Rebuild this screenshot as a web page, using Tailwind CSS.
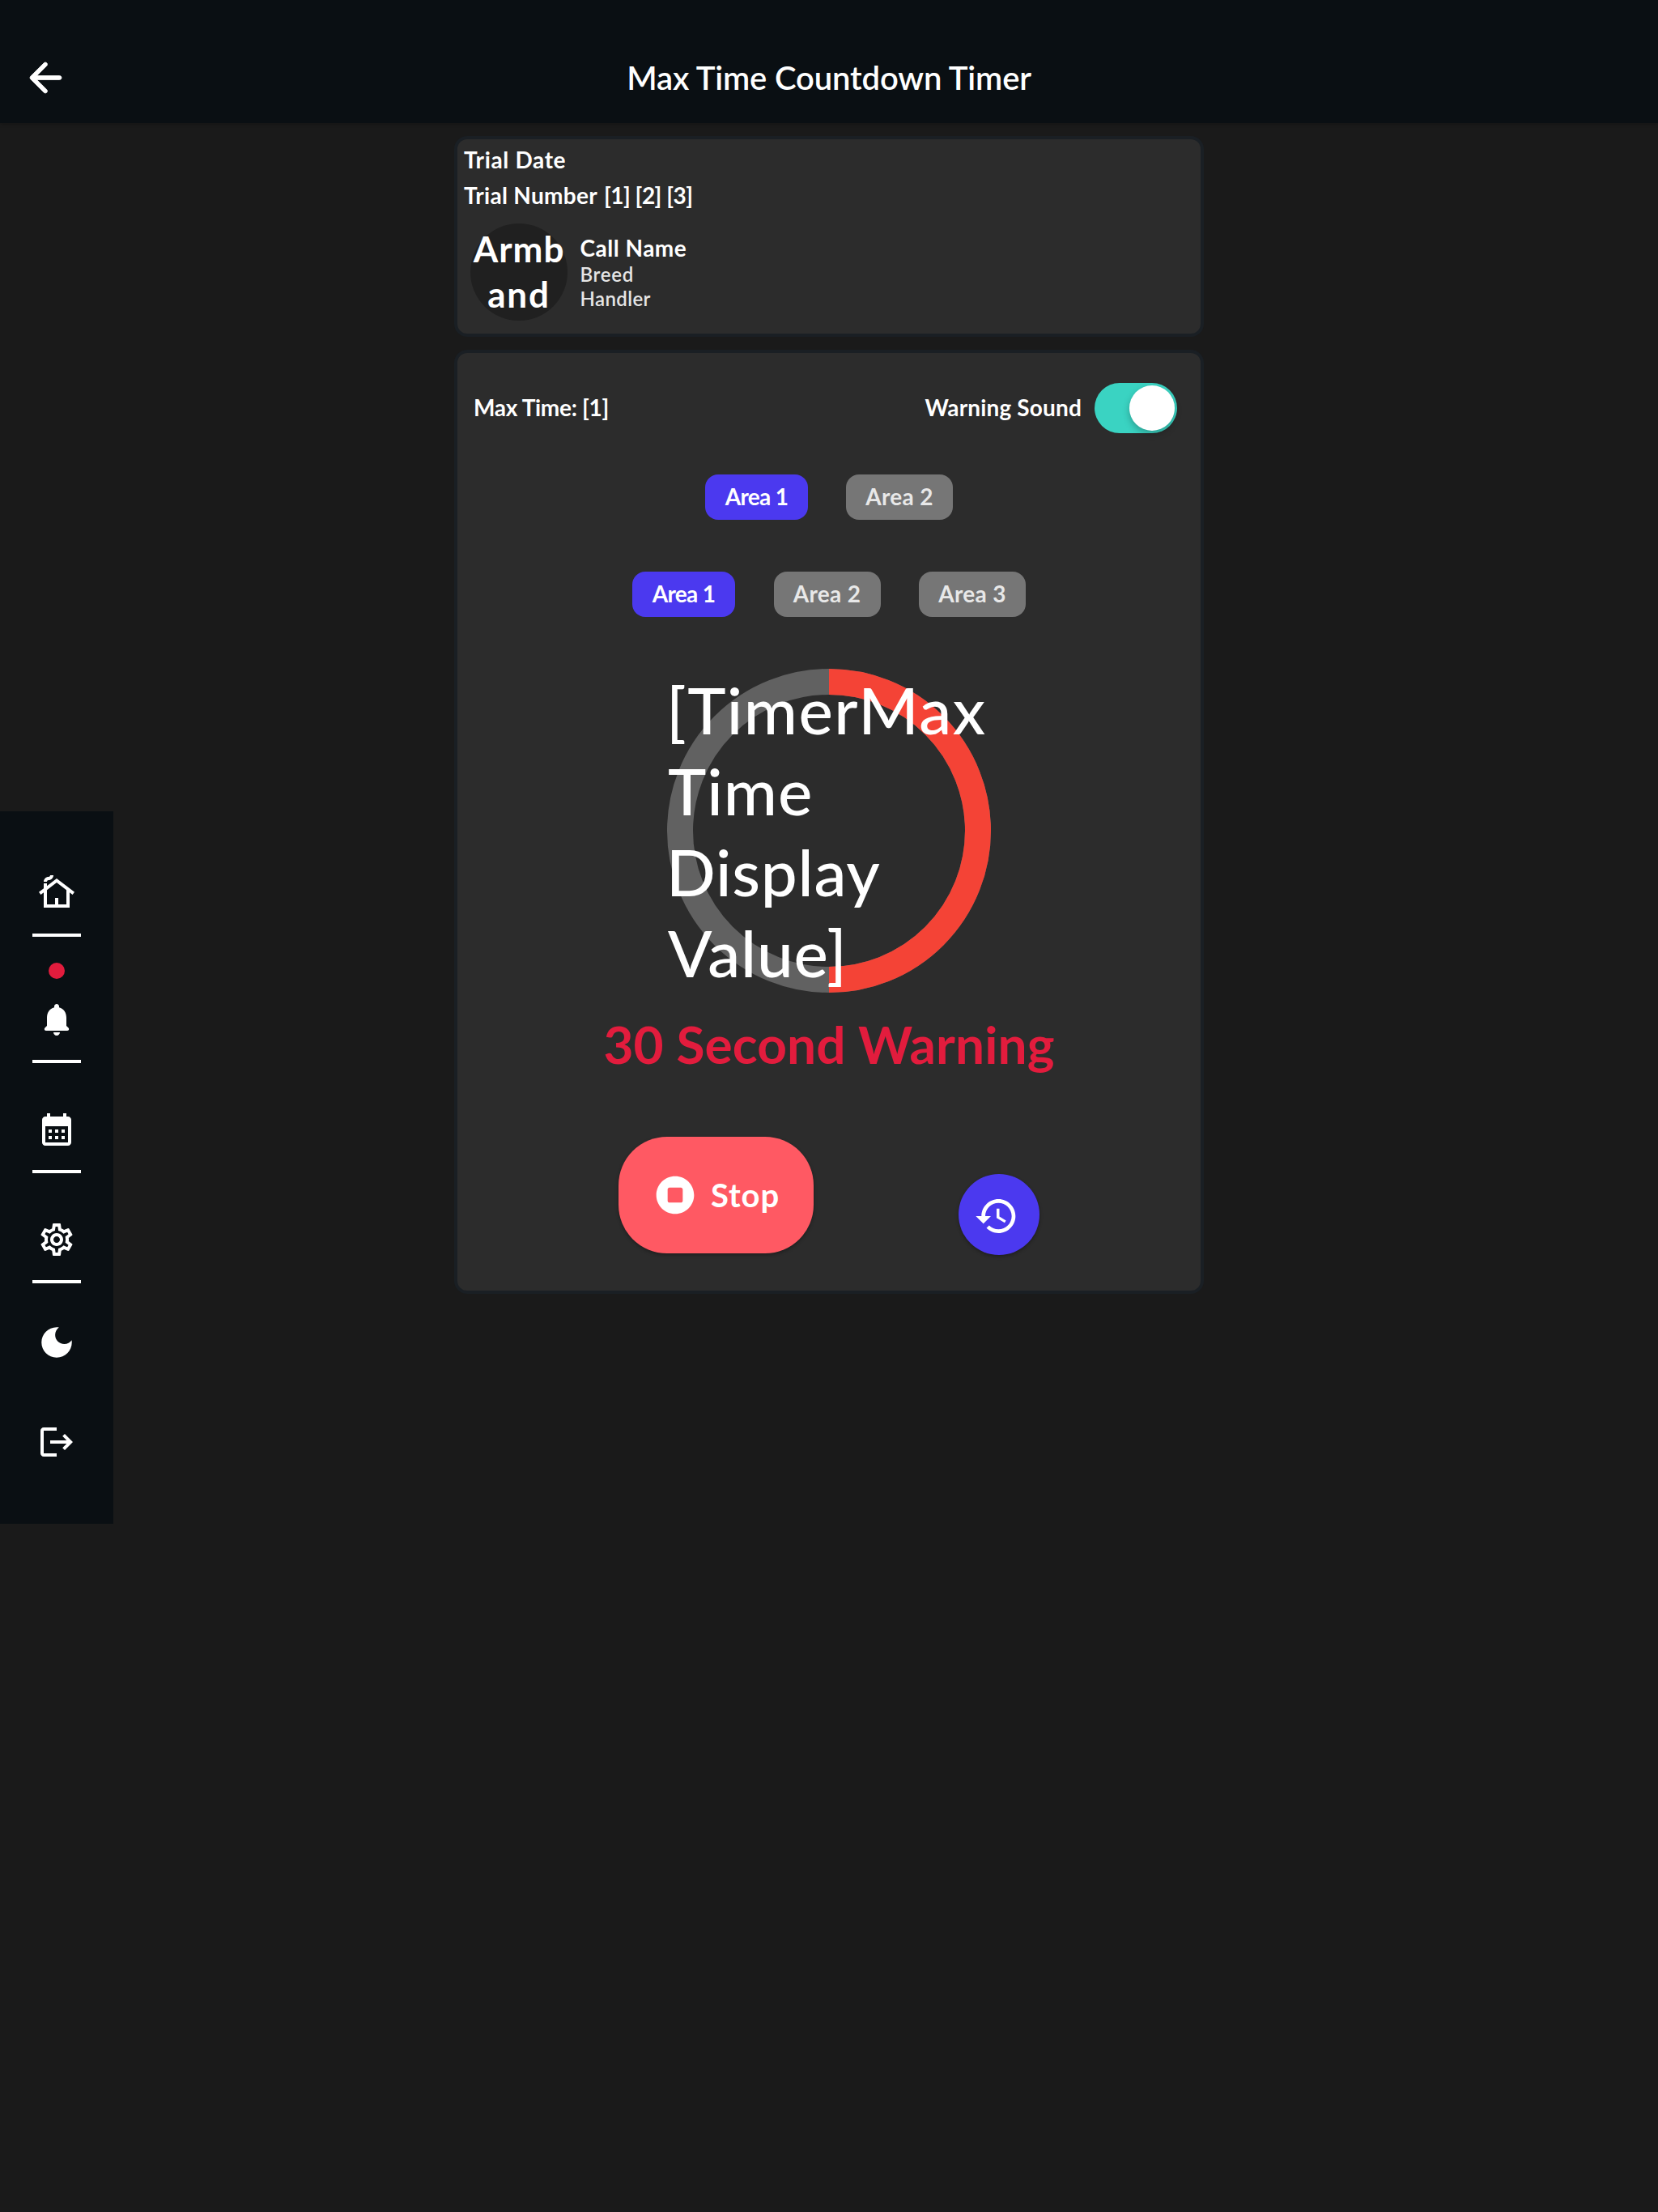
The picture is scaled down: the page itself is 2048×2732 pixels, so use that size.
<!DOCTYPE html>
<html lang="en">
<head>
<meta charset="utf-8">
<title>Max Time Countdown Timer</title>
<script src="https://cdn.jsdelivr.net/npm/@tailwindcss/browser@4"></script>
</head>
<body class="h-[2732px] w-[2048px] overflow-hidden bg-[#1a1a1a] font-['Lato',sans-serif] text-white">
  <header class="relative grid h-[152px] grid-cols-[1fr_auto_1fr] items-center bg-[#0a0f13] pt-10 shadow-[0_2px_4px_rgba(0,0,0,0.2)]">
    <button class="ml-[26px] size-[60px]" aria-label="Back">
      <svg viewBox="0 0 24 24" class="size-full fill-white stroke-white stroke-[0.3]"><path d="M19 11H7.83l4.88-4.88c.39-.39.39-1.03 0-1.42-.39-.39-1.02-.39-1.41 0l-6.59 6.59c-.39.39-.39 1.02 0 1.41l6.59 6.59c.39.39 1.02.39 1.41 0 .39-.39.39-1.02 0-1.41L7.83 13H19c.55 0 1-.45 1-1s-.45-1-1-1z"/></svg>
    </button>
    <h1 class="text-[40px] leading-[50px] font-semibold tracking-[-0.15px]">Max Time Countdown Timer</h1>
  </header>

  <div class="grid grid-cols-[140px_1fr_140px]">
    <nav class="mt-[850px] flex h-[880px] flex-col items-center self-start bg-[#0a0f13]">
      <svg viewBox="0 0 24 24" class="mt-[77px] size-12 shrink-0 fill-white"><path d="M12,3L6,7.58V6H4v3.11L1,11.4l1.21,1.59L4,11.62V21h16v-9.38l1.79,1.36L23,11.4L12,3z M18,19h-5v-4h-2v4H6v-8.9l6-4.58l6,4.58V19z M10,1c0,1.66-1.34,3-3,3C6.45,4,6,4.45,6,5H4c0-1.66,1.34-3,3-3c0.55,0,1-0.45,1-1H10z"/></svg>
      <div class="mt-[26px] h-1 w-[60px] bg-white"></div>
      <div class="mt-8 size-5 rounded-full bg-[#e21c3d]"></div>
      <svg viewBox="0 0 24 24" class="mt-[26px] size-12 shrink-0 fill-white"><path d="M12 22c1.1 0 2-.9 2-2h-4c0 1.1.89 2 2 2zm6-6v-5c0-3.07-1.63-5.64-4.5-6.32V4c0-.83-.67-1.5-1.5-1.5s-1.5.67-1.5 1.5v.68C7.64 5.36 6 7.92 6 11v5l-1.29 1.29c-.63.63-.19 1.71.7 1.71h13.17c.89 0 1.34-1.08.71-1.71L18 16z"/></svg>
      <div class="mt-[26px] h-1 w-[60px] bg-white"></div>
      <svg viewBox="0 0 24 24" class="mt-[58px] size-12 shrink-0 fill-white"><path d="M19 4h-1V2h-2v2H8V2H6v2H5c-1.11 0-1.99.9-1.99 2L3 20c0 1.1.89 2 2 2h14c1.1 0 2-.9 2-2V6c0-1.1-.9-2-2-2zm0 16H5V10h14v10zM9 14H7v-2h2v2zm4 0h-2v-2h2v2zm4 0h-2v-2h2v2zm-8 4H7v-2h2v2zm4 0h-2v-2h2v2zm4 0h-2v-2h2v2z"/></svg>
      <div class="mt-[26px] h-1 w-[60px] bg-white"></div>
      <svg viewBox="0 0 24 24" class="mt-[58px] size-12 shrink-0 fill-white"><path d="M19.43 12.98c.04-.32.07-.64.07-.98 0-.34-.03-.66-.07-.98l2.11-1.65c.19-.15.24-.42.12-.64l-2-3.46c-.09-.16-.26-.25-.44-.25-.06 0-.12.01-.17.03l-2.49 1c-.52-.4-1.08-.73-1.69-.98l-.38-2.65C14.46 2.18 14.25 2 14 2h-4c-.25 0-.46.18-.49.42l-.38 2.65c-.61.25-1.17.59-1.69.98l-2.49-1c-.06-.02-.12-.03-.18-.03-.17 0-.34.09-.43.25l-2 3.46c-.13.22-.07.49.12.64l2.11 1.65c-.04.32-.07.65-.07.98 0 .33.03.66.07.98l-2.11 1.65c-.19.15-.24.42-.12.64l2 3.46c.09.16.26.25.44.25.06 0 .12-.01.17-.03l2.49-1c.52.4 1.08.73 1.69.98l.38 2.65c.03.24.24.42.49.42h4c.25 0 .46-.18.49-.42l.38-2.65c.61-.25 1.17-.59 1.69-.98l2.49 1c.06.02.12.03.18.03.17 0 .34-.09.43-.25l2-3.46c.12-.22.07-.49-.12-.64l-2.11-1.65zm-1.98-1.71c.04.31.05.52.05.73 0 .21-.02.43-.05.73l-.14 1.13.89.7 1.08.84-.7 1.21-1.27-.51-1.04-.42-.9.68c-.43.32-.84.56-1.25.73l-1.06.43-.16 1.13-.2 1.35h-1.4l-.19-1.35-.16-1.13-1.06-.43c-.43-.18-.83-.41-1.23-.71l-.91-.7-1.06.43-1.27.51-.7-1.21 1.08-.84.89-.7-.14-1.13c-.03-.31-.05-.54-.05-.74s.02-.43.05-.73l.14-1.13-.89-.7-1.08-.84.7-1.21 1.27.51 1.04.42.9-.68c.43-.32.84-.56 1.25-.73l1.06-.43.16-1.13.2-1.35h1.39l.19 1.35.16 1.13 1.06.43c.43.18.83.41 1.23.71l.91.7 1.06-.43 1.27-.51.7 1.21-1.07.85-.89.7.14 1.13zM12 8c-2.21 0-4 1.79-4 4s1.79 4 4 4 4-1.79 4-4-1.79-4-4-4zm0 6c-1.1 0-2-.9-2-2s.9-2 2-2 2 .9 2 2-.9 2-2 2z"/></svg>
      <div class="mt-[26px] h-1 w-[60px] bg-white"></div>
      <svg viewBox="0 0 24 24" class="mt-12 size-[50px] shrink-0 fill-white"><path d="M12 3c-4.97 0-9 4.03-9 9s4.03 9 9 9 9-4.03 9-9c0-.46-.04-.92-.1-1.36-.98 1.37-2.58 2.26-4.4 2.26-2.98 0-5.4-2.42-5.4-5.4 0-1.81.89-3.42 2.26-4.4C12.92 3.04 12.46 3 12 3z"/></svg>
      <svg viewBox="0 0 24 24" class="mt-[74px] size-12 shrink-0 fill-white"><path d="M17 7l-1.41 1.41L18.17 11H8v2h10.17l-2.58 2.58L17 17l5-5zM4 5h8V3H4c-1.1 0-2 .9-2 2v14c0 1.1.9 2 2 2h8v-2H4V5z"/></svg>
    </nav>

    <main class="mx-auto flex w-[926px] flex-col gap-4 pt-4 font-bold">
      <section class="h-[248px] rounded-2xl border-4 border-[#1a1f24] bg-[#2c2c2c] pt-[3px] pl-2 text-[28px]">
        <p class="leading-[44px] tracking-[0.65px]">Trial Date</p>
        <div class="flex leading-[44px]">
          <span class="w-[173px] tracking-[0.3px]">Trial Number</span>
          <span class="tracking-[-0.5px]">[1] [2] [3]</span>
        </div>
        <div class="mt-[13px] flex items-center pl-2">
          <div class="flex size-[120px] flex-col items-center justify-center rounded-full bg-[#202020] pb-0.5 text-[44px] leading-[56px]">
            <span class="tracking-[1px]">Armb</span>
            <span class="tracking-[1.8px]">and</span>
          </div>
          <div class="ml-[15.5px]">
            <p class="leading-9 tracking-[0.5px]">Call Name</p>
            <p class="text-2xl leading-[30px] font-semibold tracking-[0.7px] text-[#e5e5e5]">Breed</p>
            <p class="text-2xl leading-[30px] font-semibold tracking-[0.4px] text-[#e5e5e5]">Handler</p>
          </div>
        </div>
      </section>

      <section class="flex h-[1166px] flex-col items-center rounded-2xl border-4 border-[#1a1f24] bg-[#2c2c2c] pt-[37px] text-[28px]">
        <div class="flex h-[62px] w-full items-center pr-[29px] pl-5">
          <span class="mr-auto pb-0.5 tracking-[-0.3px]">Max Time: [1]</span>
          <span class="mr-4 pb-0.5 tracking-[0.15px]">Warning Sound</span>
          <div class="flex h-[62px] w-[102px] items-center justify-end rounded-full bg-[#3ad3c2] pr-[3px]">
            <div class="size-14 rounded-full bg-white shadow-[0_4px_8px_rgba(0,0,0,0.25)]"></div>
          </div>
        </div>

        <div class="mt-[51px] flex gap-[47px] leading-[54px]">
          <button class="h-14 w-[127px] rounded-2xl bg-[#4b39ef] pb-0.5 tracking-[-0.7px]">Area 1</button>
          <button class="h-14 w-[132px] rounded-2xl bg-[#767676] pb-0.5 tracking-[0.3px] text-[#e8e8e8]">Area 2</button>
        </div>
        <div class="mt-16 flex gap-[47.5px] leading-[54px]">
          <button class="h-14 w-[127px] rounded-2xl bg-[#4b39ef] pb-0.5 tracking-[-0.7px]">Area 1</button>
          <button class="h-14 w-[132px] rounded-2xl bg-[#767676] pb-0.5 tracking-[0.3px] text-[#e8e8e8]">Area 2</button>
          <button class="h-14 w-[132px] rounded-2xl bg-[#767676] pb-0.5 tracking-[0.3px] text-[#e8e8e8]">Area 3</button>
        </div>

        <div class="relative mt-16 size-[400px] shrink-0">
          <svg viewBox="0 0 400 400" class="size-full fill-none"><circle cx="200" cy="200" r="184" stroke="#616161" stroke-width="32"/><path d="M200 16a184 184 0 0 1 0 368" stroke="#f44336" stroke-width="32"/></svg>
          <div class="absolute inset-x-0 top-0 flex flex-col text-[80px] leading-[100px] font-medium whitespace-nowrap">
            <span class="-ml-px tracking-[1.5px]">[TimerMax</span>
            <span class="ml-px tracking-[1.1px]">Time</span>
            <span class="-ml-px tracking-[0.8px]">Display</span>
            <span class="ml-px tracking-[0.8px]">Value]</span>
          </div>
        </div>

        <p class="mt-6 text-[64px] leading-[80px] font-bold tracking-[0.1px] text-[#e21c3d]">30 Second Warning</p>

        <div class="mt-[74px] flex h-[146px] justify-between gap-[179px]">
          <button class="flex h-36 w-[241px] items-center rounded-[60px] bg-[#ff5963] pl-[42px] text-[40px] shadow-[0_2px_4px_rgba(0,0,0,0.3)]">
            <svg viewBox="0 0 24 24" class="size-14 fill-white"><path d="M12 2C6.48 2 2 6.48 2 12s4.48 10 10 10 10-4.48 10-10S17.52 2 12 2zm3 14H9c-.55 0-1-.45-1-1V9c0-.55.45-1 1-1h6c.55 0 1 .45 1 1v6c0 .55-.45 1-1 1z"/></svg>
            <span class="ml-4 tracking-[0.9px]">Stop</span>
          </button>
          <button class="grid size-[100px] place-items-center self-end rounded-full bg-[#4b39ef] pt-1 pr-1.5 shadow-[0_2px_4px_rgba(0,0,0,0.3)]" aria-label="Reset">
            <svg viewBox="0 0 24 24" class="size-14 fill-white"><path d="M13 3c-4.97 0-9 4.03-9 9H1l3.89 3.89.07.14L9 12H6c0-3.87 3.13-7 7-7s7 3.13 7 7-3.13 7-7 7c-1.93 0-3.68-.79-4.94-2.06l-1.42 1.42C8.27 19.99 10.51 21 13 21c4.97 0 9-4.03 9-9s-4.03-9-9-9zm-1 5v5l4.28 2.54.72-1.21-3.5-2.08V8H12z"/></svg>
          </button>
        </div>
      </section>
    </main>
  </div>
</body>
</html>
